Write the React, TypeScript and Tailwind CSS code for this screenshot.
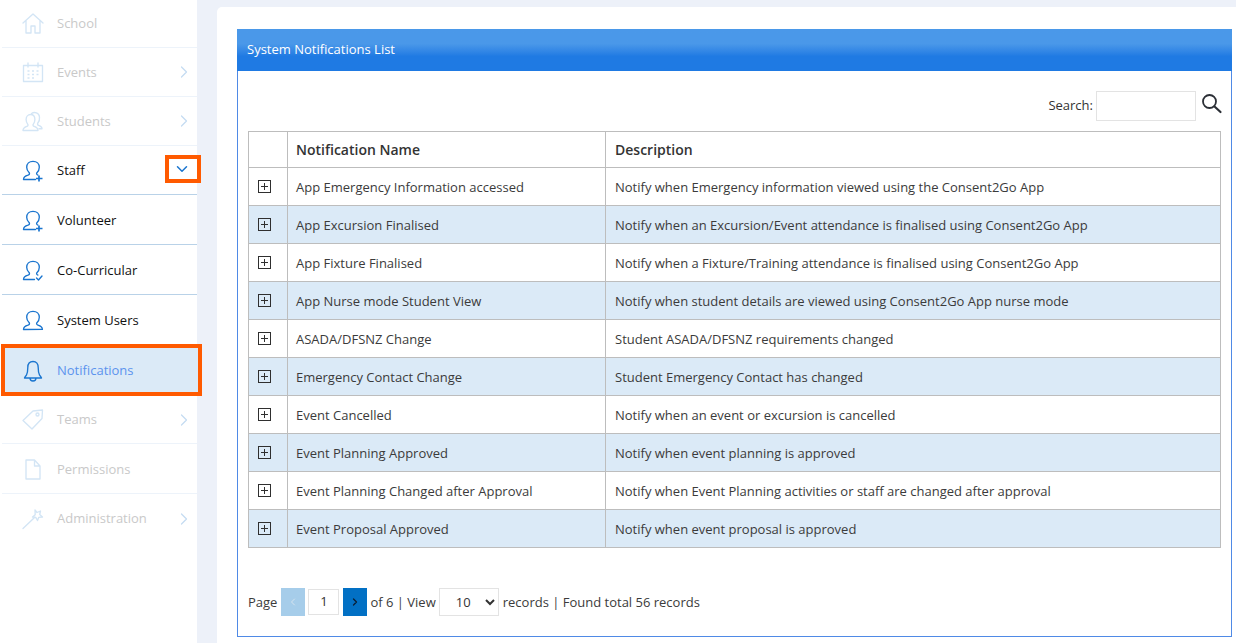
import { ChevronDown, ChevronRight } from 'lucide-react'
import type { ReactNode } from 'react'

const rows = [
  ['App Emergency Information accessed', 'Notify when Emergency information viewed using the Consent2Go App'],
  ['App Excursion Finalised', 'Notify when an Excursion/Event attendance is finalised using Consent2Go App'],
  ['App Fixture Finalised', 'Notify when a Fixture/Training attendance is finalised using Consent2Go App'],
  ['App Nurse mode Student View', 'Notify when student details are viewed using Consent2Go App nurse mode'],
  ['ASADA/DFSNZ Change', 'Student ASADA/DFSNZ requirements changed'],
  ['Emergency Contact Change', 'Student Emergency Contact has changed'],
  ['Event Cancelled', 'Notify when an event or excursion is cancelled'],
  ['Event Planning Approved', 'Notify when event planning is approved'],
  ['Event Planning Changed after Approval', 'Notify when Event Planning activities or staff are changed after approval'],
  ['Event Proposal Approved', 'Notify when event proposal is approved'],
]

const Icon = ({ children }: { children: ReactNode }) => (
  <svg viewBox="0 0 22 22" width="22" height="22" fill="none" stroke="currentColor" strokeWidth="1.35" strokeLinecap="round" strokeLinejoin="round">
    {children}
  </svg>
)

// shared head and shoulders, left open at the lower right so a badge can sit there
const person = 'M1.5 19.5c0-2.800 1.800-3.500 4.500-4.300 1.500-.5 1.800-1.500 1.200-2.500C5.600 11.300 4.700 9.500 4.700 7.300c0-3.600 2.500-6 6.300-6s6.300 2.400 6.300 6c0 2.200-.8 4-2.400 5.400-.6 1-.3 2 1 2.400'

const icons = {
  school: (
    <Icon>
      <path d="M1 10 11 1l10 9M4 7.500V20h5v-7h4v7h5V7.500" />
    </Icon>
  ),
  events: (
    <Icon>
      <path d="M1.500 3.500h19v16h-19zM6 1v4M16 1v4" />
      <path d="M5.500 9h2M10 9h2M14.500 9h2M5.500 12.500h2M10 12.500h2M14.500 12.500h2M5.500 16h2M10 16h2" strokeLinecap="butt" />
    </Icon>
  ),
  students: (
    <Icon>
      <path d="M9.500 2.500c3-2 7.500-.8 8 3.500.3 2.500-.5 4.800-1.800 6.300-.4 1 0 1.700 1 2.100 2 .7 3.300 1.300 3.300 3.300h-3" />
      <path d="M1 19.500c0-2.800 1.700-3.300 4-4.100 1-.4 1.200-1.200.8-2C4.700 12 4.100 10.500 4.100 8.500c0-3 1.900-5 4.400-5s4.400 2 4.400 5c0 2-.6 3.500-1.700 4.900-.4.800-.2 1.600.8 2 2.300.8 4 1.300 4 4.100z" />
    </Icon>
  ),
  personPlus: (
    <Icon>
      <path d={`${person}M1.500 19.500h12`} />
      <path d="M17 15.500v6M14 18.500h6.500" strokeWidth="1.700" strokeLinecap="butt" />
    </Icon>
  ),
  personCheck: (
    <Icon>
      <path d={`${person}M1.500 19.500h11`} />
      <path d="m14.500 18 2 2 3.500-4" />
    </Icon>
  ),
  person: (
    <Icon>
      <path d={`${person}c2.700.8 4.500 1.500 4.500 4.300z`} />
    </Icon>
  ),
  bell: (
    <Icon>
      <path d="M11 1.500c-3.500 0-5.200 2.700-5.200 6 0 3.500-.4 5.500-1.300 7.500-.4.900-1.500 1.500-2 3h17c-.5-1.500-1.600-2.100-2-3-.9-2-1.300-4-1.300-7.500 0-3.300-1.700-6-5.200-6zM8 18c0 1.700 1.300 3 3 3s3-1.300 3-3" />
    </Icon>
  ),
  tag: (
    <Icon>
      <path d="m1 11.500 10-9.500 9.500-1-.5 8.500-10 10.500z" />
      <circle cx="15.500" cy="5.500" r="1.500" />
    </Icon>
  ),
  file: (
    <Icon>
      <path d="M4 1h8.500l5.500 6v13H4zM12.500 1v6H18" />
    </Icon>
  ),
  wand: (
    <Icon>
      <path d="m1 20.500 11-10.500M13 2l2 2.500 3.500-1.500-.8 3.500L20.500 9l-3.700.3-1.300 3.200-1.600-3-3.400-.5 2.700-2.300z" />
    </Icon>
  ),
}

const navItems = [
  { label: 'School', icon: icons.school, faded: true, h: 'h-[48px]', pad: 'pt-0' },
  { label: 'Events', icon: icons.events, faded: true, arrow: true, h: 'h-[49px]', pad: 'pt-[2px]' },
  { label: 'Students', icon: icons.students, faded: true, arrow: true, h: 'h-[49px]', pad: 'pt-[2px]' },
  { label: 'Staff', icon: icons.personPlus, open: true, h: 'h-[49px]', pad: 'pt-[2px]' },
  { label: 'Volunteer', icon: icons.personPlus, h: 'h-[50px]', pad: 'pt-[2px]' },
  { label: 'Co-Curricular', icon: icons.personCheck, h: 'h-[50px]', pad: 'pt-[2px]' },
  { label: 'System Users', icon: icons.person, h: 'h-[50px]', plain: true, pad: 'pt-[2px]' },
  { label: 'Notifications', icon: icons.bell, active: true, h: 'h-[52px]', pad: 'pt-[2px]' },
  { label: 'Teams', icon: icons.tag, faded: true, arrow: true, h: 'h-[48px]', pad: 'pt-0' },
  { label: 'Permissions', icon: icons.file, faded: true, h: 'h-[50px]', pad: 'pt-[2px]' },
  { label: 'Administration', icon: icons.wand, faded: true, arrow: true, h: 'h-[50px]', plain: true, pad: 'pt-0' },
]

function NavRow({ item }: { item: (typeof navItems)[number] }) {
  const border = item.plain
    ? ''
    : item.faded
      ? 'border-b border-[#edf3fa]'
      : 'border-b border-[#b9d2e8]'

  if (item.active) {
    return (
      <div className={`relative z-10 -mt-px ml-px -mr-[5px] flex ${item.h} ${item.pad} items-center border-4 border-[#ff5a00] bg-[#dbeaf7] pl-[17px] text-[#5b93ee]`}>
        <span className="flex text-[#1a75cf]">{item.icon}</span>
        <span className="ml-[13px]">{item.label}</span>
      </div>
    )
  }

  return (
    <div className={`relative ml-0.5 flex ${item.h} ${item.pad} items-center pl-5 ${border} ${item.faded ? 'text-[#c9c9c9]' : 'text-[#111111]'}`}>
      <span className={`flex ${item.faded ? 'text-[#d3e5f5]' : 'text-[#1a75cf]'}`}>{item.icon}</span>
      <span className="ml-[13px]">{item.label}</span>
      {item.arrow && <ChevronRight className="absolute right-[3px] top-1/2 -translate-y-1/2 text-[#c5dcf2]" size={20} strokeWidth={1.5} />}
      {item.open && (
        <span className="absolute -right-1 top-[9px] flex h-[28px] w-[36px] items-center justify-center border-4 border-[#ff5a00] bg-white pr-[2px] text-[#1a75cf]">
          <ChevronDown size={18} strokeWidth={2} />
        </span>
      )}
    </div>
  )
}

export default function App() {
  return (
    <div className="flex h-[643px] w-[1236px] overflow-hidden bg-[#edf1f9] font-['Open_Sans',sans-serif] text-[13px]">
      <aside className="w-[197px] shrink-0 bg-white">
        {navItems.map((item) => (
          <NavRow key={item.label} item={item} />
        ))}
      </aside>

      <main className="ml-5 mt-[7px] flex-1 rounded-tl-[5px] bg-white pl-5 pr-1 pt-[22px]">
        <section className="h-[608px] border border-[#4f8ae6]">
          <h2 className="-mx-px -mt-px flex h-[42px] items-center bg-gradient-to-b from-[#4a98e9] from-35% to-[#1f7ae3] to-65% pl-[10px] text-[13px] font-normal text-white">
            System Notifications List
          </h2>

          <div className="px-[10px]">
            <div className="flex h-[60px] items-center justify-end pb-[10px] pt-5">
              <span className="mr-[3px] text-[#333333]">Search:</span>
              <input className="h-[30px] w-[100px] border border-[#e3e3e3] bg-white" aria-label="Search" />
              <svg className="-mr-0.5 -mt-1 ml-[5px]" width="22" height="22" viewBox="0 0 22 22" fill="none" stroke="#2b2f36" strokeLinecap="round">
                <circle cx="8.500" cy="8.500" r="6.500" strokeWidth="1.800" />
                <path d="m13.500 13.500 6 5.500" strokeWidth="2.200" />
              </svg>
            </div>

            <table className="w-[973px] table-fixed border-collapse text-[#3b3b3b]">
              <colgroup>
                <col className="w-[39px]" />
                <col className="w-[318px]" />
                <col />
              </colgroup>
              <thead>
                <tr className="h-[36px]">
                  <th className="border border-[#bdbdbd]" />
                  <th className="border border-[#bdbdbd] pl-2 text-left text-[14px] font-semibold text-[#333333]">Notification Name</th>
                  <th className="border border-[#bdbdbd] pl-[9px] text-left text-[14px] font-semibold text-[#333333]">Description</th>
                </tr>
              </thead>
              <tbody>
                {rows.map(([name, description], i) => (
                  <tr key={name} className={`h-[38px] ${i % 2 ? 'bg-[#dbeaf7]' : 'bg-white'}`}>
                    <td className="border border-[#bdbdbd]">
                      <span className="relative ml-[9px] block h-[13px] w-[13px] border border-[#2f2f2f]">
                        <span className="absolute left-[2px] top-[5px] h-px w-[7px] bg-[#2f2f2f]" />
                        <span className="absolute left-[5px] top-[2px] h-[7px] w-px bg-[#2f2f2f]" />
                      </span>
                    </td>
                    <td className="border border-[#bdbdbd] pl-2 pt-[2px]">{name}</td>
                    <td className="border border-[#bdbdbd] pl-[9px] pt-[2px]">{description}</td>
                  </tr>
                ))}
              </tbody>
            </table>

            <div className="mt-10 flex items-center text-[#3b3b3b]">
              <span className="mt-[2px]">Page</span>
              <span className="ml-[4px] flex h-[28px] w-[24px] items-center justify-center bg-[#a6cdea] text-[#d6e4ef]">
                <ChevronRight className="rotate-180" size={12} strokeWidth={2} />
              </span>
              <span className="ml-[3px] flex h-[26px] w-[31px] items-center justify-center border border-[#e3e3e3] text-[#333333]">1</span>
              <span className="ml-[4px] flex h-[28px] w-[24px] items-center justify-center bg-[#0270c4] text-[#0b1f33]">
                <ChevronRight size={12} strokeWidth={2.500} />
              </span>
              <span className="ml-[3px] mt-[2px]">of 6 | View</span>
              <select className="ml-[3px] h-[28px] w-[60px] border border-[#e3e3e3] bg-white pl-3 text-[13px] text-[#333333]" defaultValue="10" aria-label="Records per page">
                <option>10</option>
                <option>25</option>
                <option>50</option>
              </select>
              <span className="ml-1 mt-[2px]">records | Found total 56 records</span>
            </div>
          </div>
        </section>
      </main>
    </div>
  )
}
